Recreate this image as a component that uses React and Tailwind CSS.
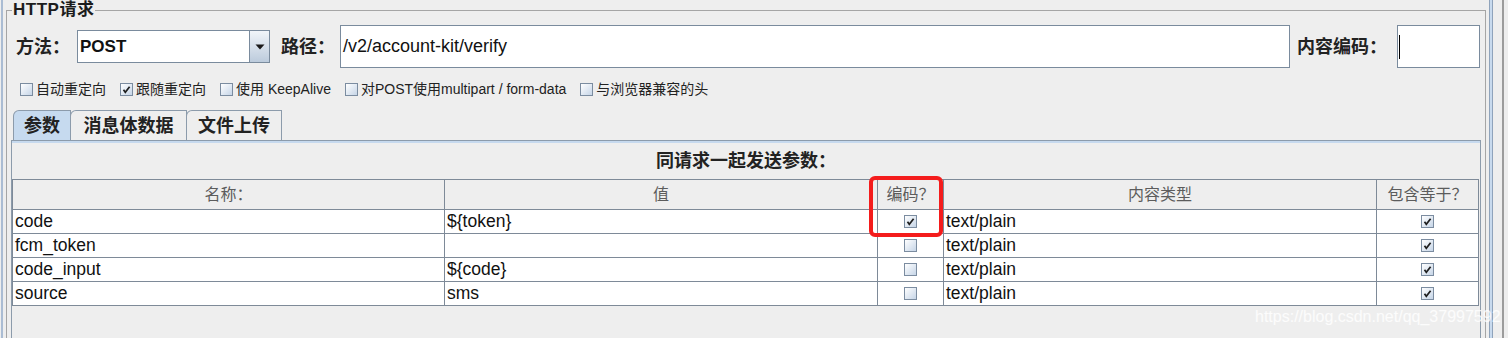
import React from "react";

const rows = [
  { name: "code", value: "${token}", encode: true },
  { name: "fcm_token", value: "", encode: false },
  { name: "code_input", value: "${code}", encode: false },
  { name: "source", value: "sms", encode: false },
];

const options = [
  { label: "自动重定向", checked: false },
  { label: "跟随重定向", checked: true },
  { label: "使用 KeepAlive", checked: false },
  { label: "对POST使用multipart / form-data", checked: false },
  { label: "与浏览器兼容的头", checked: false },
];

// small swing-style checkbox
const Box = ({ checked }) => (
  <span className="inline-flex w-[13px] h-[13px] shrink-0 items-center justify-center border border-[#7b8ca0] bg-linear-to-br from-white to-[#c6d5e7]">
    {checked && (
      <svg width="11" height="11" viewBox="0 0 11 11">
        <path d="M2.5 5.8 L4.3 8.3 L8.6 2.8" fill="none" stroke="#1f1f1f" strokeWidth="1.7" />
      </svg>
    )}
  </span>
);

const App = () => {
  return (
    <div className="relative flex w-[1508px] h-[338px] overflow-hidden bg-[#eeeeee] text-[#111] font-['Liberation_Sans','Noto_Sans_CJK_SC',sans-serif]">
      {/* left edge */}
      <div className="w-[6px] shrink-0 flex">
        <div className="ml-[1px] w-[2px] bg-[#aabcd3]" />
      </div>

      <fieldset className="w-[1480px] h-[420px] shrink-0 border border-[#a5a5a5] flex flex-col">
        <legend className="ml-[5px] px-[1px] text-[17px] font-bold leading-[20px] text-[#1c1c1c] tracking-[0.5px]">
          HTTP请求
        </legend>

        {/* method / path / encoding */}
        <div className="mt-[5px] h-[43px] flex items-center pl-[9px] pr-[5px]">
          <span className="w-[54px] text-[18px] font-bold leading-none text-[#222]">方法：</span>
          <div className="ml-[7px] w-[193px] h-[33px] flex border border-[#7a8b9d] bg-white">
            <span className="flex-1 pl-[2px] flex items-center text-[17px] font-bold">POST</span>
            <span className="w-[20px] flex items-center justify-center border-l border-[#7a8b9d] bg-linear-to-b from-[#f1f5f9] to-[#bccbdc]">
              <svg width="10" height="6" viewBox="0 0 10 6">
                <path d="M0.5 0.5 L9.5 0.5 L5 5.5 Z" fill="#1a1a1a" />
              </svg>
            </span>
          </div>
          <span className="ml-[11px] w-[54px] text-[18px] font-bold leading-none text-[#222]">路径：</span>
          <div className="ml-[5px] flex-1 h-[43px] flex items-center border border-[#7a8b9d] bg-white pl-[2px] text-[18px]">
            /v2/account-kit/verify
          </div>
          <span className="ml-[7px] w-[90px] text-[18px] font-bold leading-none text-[#222]">内容编码：</span>
          <div className="ml-[10px] w-[83px] h-[43px] flex items-center border border-[#7a8b9d] bg-white pl-[1px]">
            <div className="w-px h-[24px] bg-black" />
          </div>
        </div>

        {/* options */}
        <div className="mt-[12px] h-[18px] flex items-center gap-[14px] pl-[13px] text-[14px] text-[#222]">
          {options.map((o) => (
            <label key={o.label} className="flex items-center gap-[3px] leading-none">
              <Box checked={o.checked} />
              <span>{o.label}</span>
            </label>
          ))}
        </div>

        {/* tabs */}
        <div className="mt-[12px] mx-[4px] flex flex-col flex-1">
          <div className="flex h-[30px] pl-[2px] text-[18px] font-bold leading-none text-[#222]">
            <div className="w-[58px] flex items-center justify-center border border-b-0 border-[#8c9bab] rounded-tl-[6px] bg-[#c6daef]">
              参数
            </div>
            <div className="w-[117px] -ml-px flex items-center justify-center border border-b-0 border-[#8c9bab] rounded-tl-[6px]">
              消息体数据
            </div>
            <div className="w-[96px] -ml-px flex items-center justify-center border border-b-0 border-[#8c9bab] rounded-tl-[6px]">
              文件上传
            </div>
          </div>

          <div className="flex-1 border border-[#8c9bab]">
            <div className="h-full border-t-2 border-[#c6d9ee]">
              <div className="h-[36px] flex items-center justify-center text-[18px] font-bold text-[#222]">
                同请求一起发送参数：
              </div>
              <table className="table-fixed border-collapse w-[1466px]">
                <colgroup>
                  <col className="w-[432px]" />
                  <col className="w-[433px]" />
                  <col className="w-[66px]" />
                  <col className="w-[433px]" />
                  <col className="w-[102px]" />
                </colgroup>
                <thead>
                  <tr className="h-[30px] text-[16px] font-normal text-[#5c5c5c]">
                    <th className="border border-[#7e8a98] font-normal">名称：</th>
                    <th className="border border-[#7e8a98] font-normal">值</th>
                    <th className="border border-[#7e8a98] font-normal">编码？</th>
                    <th className="border border-[#7e8a98] font-normal">内容类型</th>
                    <th className="border border-[#7e8a98] font-normal">包含等于？</th>
                  </tr>
                </thead>
                <tbody className="bg-white text-[17.5px] leading-none">
                  {rows.map((r) => (
                    <tr key={r.name} className="h-[24px]">
                      <td className="border border-[#7e8a98] px-[2px]">{r.name}</td>
                      <td className="border border-[#7e8a98] px-[2px]">{r.value}</td>
                      <td className="border border-[#7e8a98]">
                        <div className="flex justify-center">
                          <Box checked={r.encode} />
                        </div>
                      </td>
                      <td className="border border-[#7e8a98] px-[2px]">text/plain</td>
                      <td className="border border-[#7e8a98]">
                        <div className="flex justify-center">
                          <Box checked />
                        </div>
                      </td>
                    </tr>
                  ))}
                </tbody>
              </table>
            </div>
          </div>
        </div>
      </fieldset>

      {/* right edge */}
      <div className="flex-1 flex">
        <div className="ml-[3px] w-[4px] bg-[#c8daee] border-x border-[#8fa3bb]" />
        <div className="ml-[9px] w-[2px] bg-[#9c9c9c]" />
      </div>

      {/* annotation box */}
      <div className="absolute left-[869px] top-[176px] w-[74px] h-[61px] border-4 border-[#f41c1c] rounded-[6px]" />

      {/* watermark */}
      <div className="absolute left-[1255px] top-[307px] text-[16px] text-white/80 leading-[20px]">
        https://blog.csdn.net/qq_37997592
      </div>
    </div>
  );
};

export default App;
